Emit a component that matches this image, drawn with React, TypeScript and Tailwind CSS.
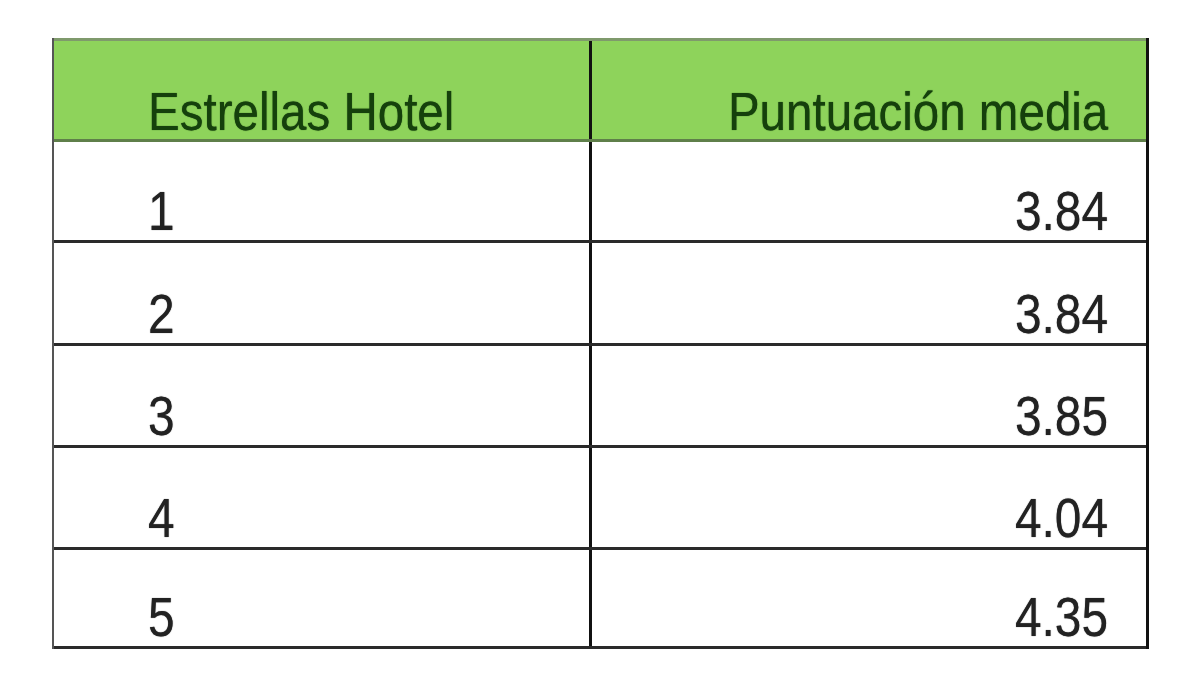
import React from 'react';

const rows = [
  { stars: '1', score: '3.84', h: 'h-[101px]' },
  { stars: '2', score: '3.84', h: 'h-[103px]' },
  { stars: '3', score: '3.85', h: 'h-[102px]' },
  { stars: '4', score: '4.04', h: 'h-[102px]' },
  { stars: '5', score: '4.35', h: 'h-[99px]' },
];

export default function App() {
  return (
    <div
      className="min-h-[681px] w-[1200px] bg-white pl-[52px] pt-[38px]"
      style={{ fontFamily: '"Liberation Sans", Arial, sans-serif' }}
    >
      <div className="w-[1097px] border-l-2 border-r-[3px] border-l-[#555] border-r-[#111]">
        {/* header */}
        <div className="flex h-[104px] border-y-[3px] border-t-[#7f9a6c] border-b-[#5f7f4a] bg-[#8ed35b] text-[#15400c]">
          <div className="flex w-[538px] items-end border-r-[3px] border-r-[#111] pb-[1px] pl-[94px]">
            <span className="inline-block origin-left scale-x-[0.88] text-[54px] leading-none [text-shadow:0_0_1px_#15400c]">Estrellas Hotel</span>
          </div>
          <div className="flex flex-1 items-end justify-end pb-[1px] pr-[38px]">
            <span className="inline-block origin-right scale-x-[0.88] text-[54px] leading-none [text-shadow:0_0_1px_#15400c]">Puntuación media</span>
          </div>
        </div>
        {rows.map((r) => (
          <div key={r.stars} className={`flex ${r.h} border-b-[3px] border-b-[#2a2a2a] text-[#222]`}>
            <div className="flex w-[538px] items-end border-r-[3px] border-r-[#111] pb-[1px] pl-[94px]">
              <span className="inline-block origin-left scale-x-[0.87] text-[55px] leading-none [text-shadow:0_0_1px_#444]">{r.stars}</span>
            </div>
            <div className="flex flex-1 items-end justify-end pb-[1px] pr-[38px]">
              <span className="inline-block origin-right scale-x-[0.87] text-[55px] leading-none [text-shadow:0_0_1px_#444]">{r.score}</span>
            </div>
          </div>
        ))}
      </div>
    </div>
  );
}
